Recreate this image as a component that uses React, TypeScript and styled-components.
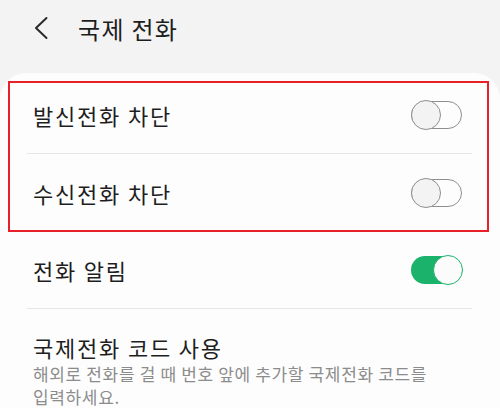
import * as React from "react";
import styled, { createGlobalStyle } from "styled-components";

const GlobalStyle = createGlobalStyle`
  html, body {
    margin: 0;
    padding: 0;
    background: #f3f3f3;
  }
  body {
    font-family: "Noto Sans CJK KR", "Noto Sans", sans-serif;
    color: #1c1c1c;
  }
`;

const Screen = styled.div`
  width: 500px;
  height: 408px;
  overflow: hidden;
  background: #f3f3f3;
  display: flex;
  flex-direction: column;
`;

const Header = styled.header`
  height: 75px;
  display: flex;
  align-items: flex-start;
  padding: 13px 0 0 33px;
  box-sizing: border-box;
  gap: 26px;
`;

const BackButton = styled.button`
  border: none;
  background: none;
  padding: 0;
  width: 19px;
  height: 30px;
  display: flex;
  align-items: center;
  cursor: pointer;
`;

const Title = styled.h1`
  margin: 0;
  font-size: 24px;
  font-weight: 400;
  line-height: 32px;
  letter-spacing: 1.3px;
  color: #1e1e1e;
`;

const Card = styled.section`
  flex: 1;
  background: #fdfdfd;
  border-radius: 26px 26px 0 0;
  padding-top: 3px;
`;

const Highlight = styled.div`
  position: relative;

  &::after {
    content: "";
    position: absolute;
    left: 8px;
    right: 11px;
    top: 5px;
    bottom: -1px;
    border: 2px solid #e8202a;
    pointer-events: none;
  }
`;

const Row = styled.div`
  height: 77px;
  display: flex;
  align-items: center;
  justify-content: space-between;
  padding: 0 38px 0 33px;
`;

const Label = styled.span`
  font-size: 22px;
  line-height: 30px;
  letter-spacing: 1.8px;
  color: #1e1e1e;
`;

const Divider = styled.div`
  height: 1px;
  margin: 0 28px 0 27px;
  background: #e6e6e6;
`;

const InfoBlock = styled.div`
  padding: 23px 38px 0 33px;
  display: flex;
  flex-direction: column;
`;

const Description = styled.p`
  margin: 0;
  font-size: 17px;
  line-height: 23px;
  letter-spacing: 0.65px;
  word-break: keep-all;
  color: #8c8c8c;
`;

const Track = styled.span<{ $on: boolean }>`
  position: relative;
  display: inline-block;
  width: 51px;
  height: 28px;
  box-sizing: border-box;
  border-radius: 14px;
  background: ${p => (p.$on ? "#1bb36b" : "transparent")};
  border: ${p => (p.$on ? "none" : "1.5px solid #8e8e8e")};
`;

const Thumb = styled.span<{ $on: boolean }>`
  position: absolute;
  top: 50%;
  width: 30px;
  height: 30px;
  box-sizing: border-box;
  border-radius: 50%;
  transform: translateY(-50%);
  background: ${p => (p.$on ? "#fbfbfb" : "#f3f3f3")};
  border: 1.5px solid ${p => (p.$on ? "#1bb36b" : "#8e8e8e")};
  ${p => (p.$on ? "right: -1px;" : "left: -1.5px;")}
`;

const Toggle = ({ on }: { on: boolean }) => (
  <Track $on={on} role="switch" aria-checked={on}>
    <Thumb $on={on} />
  </Track>
);

export default function App() {
  return (
    <>
      <GlobalStyle />
      <Screen>
        <Header>
          <BackButton aria-label="뒤로">
            <svg width="16" height="24" viewBox="0 0 16 24">
              <path d="M13.5 2 L3 12 L13.5 22" fill="none" stroke="#2a2a2a" strokeWidth="2" strokeLinecap="round" strokeLinejoin="round" />
            </svg>
          </BackButton>
          <Title>국제 전화</Title>
        </Header>
        <Card>
          <Highlight>
            <Row>
              <Label>발신전화 차단</Label>
              <Toggle on={false} />
            </Row>
            <Divider />
            <Row>
              <Label>수신전화 차단</Label>
              <Toggle on={false} />
            </Row>
          </Highlight>
          <Row>
            <Label>전화 알림</Label>
            <Toggle on={true} />
          </Row>
          <Divider />
          <InfoBlock>
            <Label>국제전화 코드 사용</Label>
            <Description>해외로 전화를 걸 때 번호 앞에 추가할 국제전화 코드를 입력하세요.</Description>
          </InfoBlock>
        </Card>
      </Screen>
    </>
  );
}
